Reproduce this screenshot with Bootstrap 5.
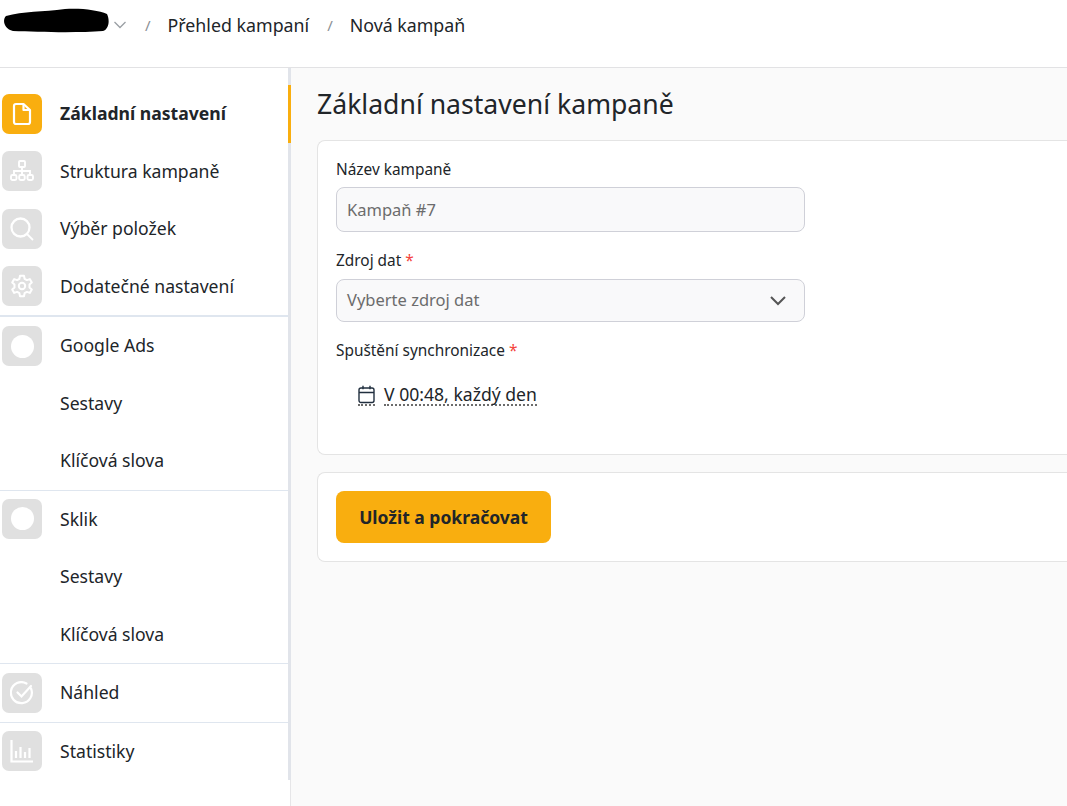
<!DOCTYPE html>
<html lang="cs">
<head>
  <meta charset="UTF-8">
  <title>Nová kampaň</title>
  <meta name="viewport" content="width=device-width, initial-scale=1">
  <link href="https://cdn.jsdelivr.net/npm/bootstrap@5.3.2/dist/css/bootstrap.min.css" rel="stylesheet">
  <style>
    body { font-family: "Noto Sans", "Open Sans", sans-serif; color: #212529; background: #fff; height: 806px; overflow: hidden; }
    .topbar { height: 68px; border-bottom: 1px solid #e2e2e4; padding: 0 0 17px 3px; font-size: 17.8px; }
    .topbar .sep { color: #8a8f94; font-size: 15px; margin: 0 17px 0 18px; }
    .redacted { width: 106px; height: 25px; margin-top: -10px; }
    .layout { height: 738px; }
    .sidebar { width: 291px; flex: none; border-right: 1px solid #e6e6e8; position: relative; padding-top: 26px; }
    .rail { position: absolute; right: -1px; top: 0; width: 3px; height: 712px; background: #e1e4ea; }
    .rail-active { position: absolute; right: -1px; top: 17px; width: 3px; height: 58px; background: #f9ae0f; }
    .nav-row { display: flex; align-items: center; height: 40px; margin-bottom: 17.3px; padding-left: 2px; font-size: 17.6px; }
    .nav-row span { position: relative; top: -.5px; }
    .nav-row.low span { top: .5px; }
    .nav-row.active span { font-weight: 700; }
    .nav-row.end-a { margin-bottom: 10px; }
    .nav-row.end-b { margin-bottom: 10.5px; }
    .nav-row.end-c { margin-bottom: 10px; }
    .nav-row.last { margin-bottom: 0; }
    .nav-ico { width: 40px; height: 40px; flex: none; border-radius: 7px; background: #e0e0e0; margin-right: 18px; display: flex; align-items: center; justify-content: center; }
    .nav-ico.on { background: #f9ae0f; }
    .nav-ico.none { background: none; }
    .nav-ico .dot { width: 23px; height: 23px; border-radius: 50%; background: #fff; }
    .nav-split { margin-right: 2px; border-top: 1px solid #dfe6ef; margin-top: -1px; margin-bottom: 8px; }
    .nav-split.thick { border-top-width: 2px; margin-top: -8px; margin-bottom: 9px; }
    .nav-split.wide { margin-bottom: 9px; }
    .content { flex: 1; background: #fafafa; padding: 18px 0 0 26px; min-width: 0; }
    .content h1 { font-size: 26.6px; font-weight: 400; line-height: 36px; margin-bottom: 18px; }
    .panel { background: #fff; border: 1px solid #e4e4e4; border-right: 0; border-radius: 8px 0 0 8px; padding: 18px 18px; }
    .panel-form { height: 315px; margin-bottom: 17px; }
    .panel-form label { font-size: 15.4px; line-height: 21px; margin-bottom: 7px; display: block; }
    .panel-form label.second { margin-top: 18px; margin-bottom: 8px; }
    .panel-form label.third { margin-top: 18px; margin-bottom: 8px; }
    .req { color: #f4433c; }
    .field { width: 469px; background: #f9f9fa; border: 1px solid #cfd0d8; border-radius: 8px; color: #6c6c6c; font-size: 16.5px; padding: 0 10px; }
    .field.form-control { height: 45px; line-height: 1.5; }
    .field.form-control::placeholder { color: #6c6c6c; opacity: 1; }
    .field-select { height: 43px; padding-right: 17px; }
    .schedule { padding: 15px 0 0 22px; font-size: 17.6px; line-height: 28px; gap: 9px; }
    .schedule .dotted { border-bottom: 2px dotted #6c6c6c; line-height: 20px; display: inline-block; }
    .btn-save { background: #f9ae0f; border: 0; border-radius: 8px; color: #212529; font-weight: 700; font-size: 17.5px; width: 215px; height: 52px; }
    .btn-save:hover { background: #f9ae0f; color: #212529; }
    .panel-save { height: 90px; }
  </style>
</head>
<body>

<!-- Top bar -->
<div class="topbar d-flex align-items-center">
  <svg class="redacted" viewBox="0 0 106 25"><path d="M3 8 C20 3 40 4 62 1 C78 0 95 2 104 6 C107 12 106 21 100 23 C75 25 35 24 10 23 C1 21 -1 12 3 8Z" fill="#000"/></svg>
  <svg class="ms-1" width="14" height="10" viewBox="0 0 14 10"><path d="M1.5 2 L7 7.5 L12.5 2" fill="none" stroke="#9a9fa4" stroke-width="1.3"/></svg>
  <span class="sep">/</span>
  <span>Přehled kampaní</span>
  <span class="sep">/</span>
  <span>Nová kampaň</span>
</div>

<div class="layout d-flex">
  <!-- Sidebar -->
  <div class="sidebar">
    <div class="rail"></div>
    <div class="rail-active"></div>

    <div class="nav-row active">
      <div class="nav-ico on">
        <svg width="20" height="24" viewBox="0 0 20 24" fill="none" stroke="#fff" stroke-width="2.2" stroke-linejoin="round"><path d="M4 2h7.500l6.500 6v12a2 2 0 0 1-2 2H4a2 2 0 0 1-2-2V4a2 2 0 0 1 2-2Z"/><path d="M11.500 2v6H18"/></svg>
      </div>
      <span>Základní nastavení</span>
    </div>
    <div class="nav-row">
      <div class="nav-ico">
        <svg width="24" height="22" viewBox="0 0 24 22" fill="none" stroke="#fff" stroke-width="1.9"><rect x="9" y="1" width="6" height="6" rx="1"/><path d="M12 7v4M4 15v-4h16v4M12 11v4"/><rect x="1" y="15" width="5.5" height="5" rx="1.5"/><rect x="9.2" y="15" width="5.5" height="5" rx="1.5"/><rect x="17.5" y="15" width="5.5" height="5" rx="1.5"/></svg>
      </div>
      <span>Struktura kampaně</span>
    </div>
    <div class="nav-row">
      <div class="nav-ico">
        <svg width="24" height="24" viewBox="0 0 24 24" fill="none" stroke="#fff" stroke-width="2.3"><circle cx="10.5" cy="10.5" r="9"/><path d="M17 17l6 6" stroke-width="1.8"/></svg>
      </div>
      <span>Výběr položek</span>
    </div>
    <div class="nav-row low">
      <div class="nav-ico">
        <svg width="24" height="24" viewBox="0 0 24 24" fill="none" stroke="#fff" stroke-width="2" stroke-linejoin="round"><circle cx="12" cy="12" r="3.2"/><path d="M10 1.8h4l.6 3 2.3 1.3 2.9-1 2 3.5-2.3 2v2.8l2.3 2-2 3.5-2.9-1-2.3 1.3-.6 3h-4l-.6-3-2.3-1.3-2.9 1-2-3.5 2.3-2v-2.8l-2.3-2 2-3.5 2.9 1 2.3-1.3Z"/></svg>
      </div>
      <span>Dodatečné nastavení</span>
    </div>

    <div class="nav-split thick"></div>
    <div class="nav-row"><div class="nav-ico"><div class="dot"></div></div><span>Google Ads</span></div>
    <div class="nav-row"><div class="nav-ico none"></div><span>Sestavy</span></div>
    <div class="nav-row end-a"><div class="nav-ico none"></div><span>Klíčová slova</span></div>

    <div class="nav-split"></div>
    <div class="nav-row low"><div class="nav-ico"><div class="dot"></div></div><span>Sklik</span></div>
    <div class="nav-row low"><div class="nav-ico none"></div><span>Sestavy</span></div>
    <div class="nav-row end-b low"><div class="nav-ico none"></div><span>Klíčová slova</span></div>

    <div class="nav-split wide"></div>
    <div class="nav-row end-c">
      <div class="nav-ico">
        <svg width="24" height="24" viewBox="0 0 24 24" fill="none" stroke="#fff" stroke-width="2.2" stroke-linecap="round"><path d="M21 7.5A10.5 10.5 0 1 1 16.5 2.5"/><path d="M7.5 11.5l4 4L21 5"/></svg>
      </div>
      <span>Náhled</span>
    </div>
    <div class="nav-split"></div>
    <div class="nav-row last low">
      <div class="nav-ico">
        <svg width="24" height="24" viewBox="0 0 24 24" fill="none" stroke="#fff"><path d="M1.500 1v21.500H23" stroke-width="2.2"/><path d="M6 12v7M10.500 8v11M15 13v6M19.500 9v10" stroke-width="2.2"/></svg>
      </div>
      <span>Statistiky</span>
    </div>
  </div>

  <!-- Main -->
  <div class="content">
    <h1>Základní nastavení kampaně</h1>
    <div class="panel panel-form">
      <label for="campaignName">Název kampaně</label>
      <input id="campaignName" class="form-control field" type="text" placeholder="Kampaň #7">
      <label class="second">Zdroj dat <span class="req">*</span></label>
      <div class="field field-select d-flex align-items-center justify-content-between">
        <span>Vyberte zdroj dat</span>
        <svg width="18" height="11" viewBox="0 0 18 11"><path d="M2 2l7 7 7-7" fill="none" stroke="#555" stroke-width="2"/></svg>
      </div>
      <label class="third">Spuštění synchronizace <span class="req">*</span></label>
      <div class="schedule d-flex align-items-center">
        <span class="dotted d-flex">
          <svg width="17" height="19" viewBox="0 0 17 19" fill="none" stroke="#212f3f" stroke-width="1.4"><rect x="1" y="3" width="15" height="14.500" rx="2"/><path d="M1 7.500h15M5 .8v3.500M12 .8v3.500"/></svg>
        </span>
        <span class="dotted">V 00:48, každý den</span>
      </div>
    </div>
    <div class="panel panel-save">
      <button type="button" class="btn btn-save">Uložit a pokračovat</button>
    </div>
  </div>
</div>

<script src="https://cdn.jsdelivr.net/npm/bootstrap@5.3.2/dist/js/bootstrap.bundle.min.js"></script>
</body>
</html>
